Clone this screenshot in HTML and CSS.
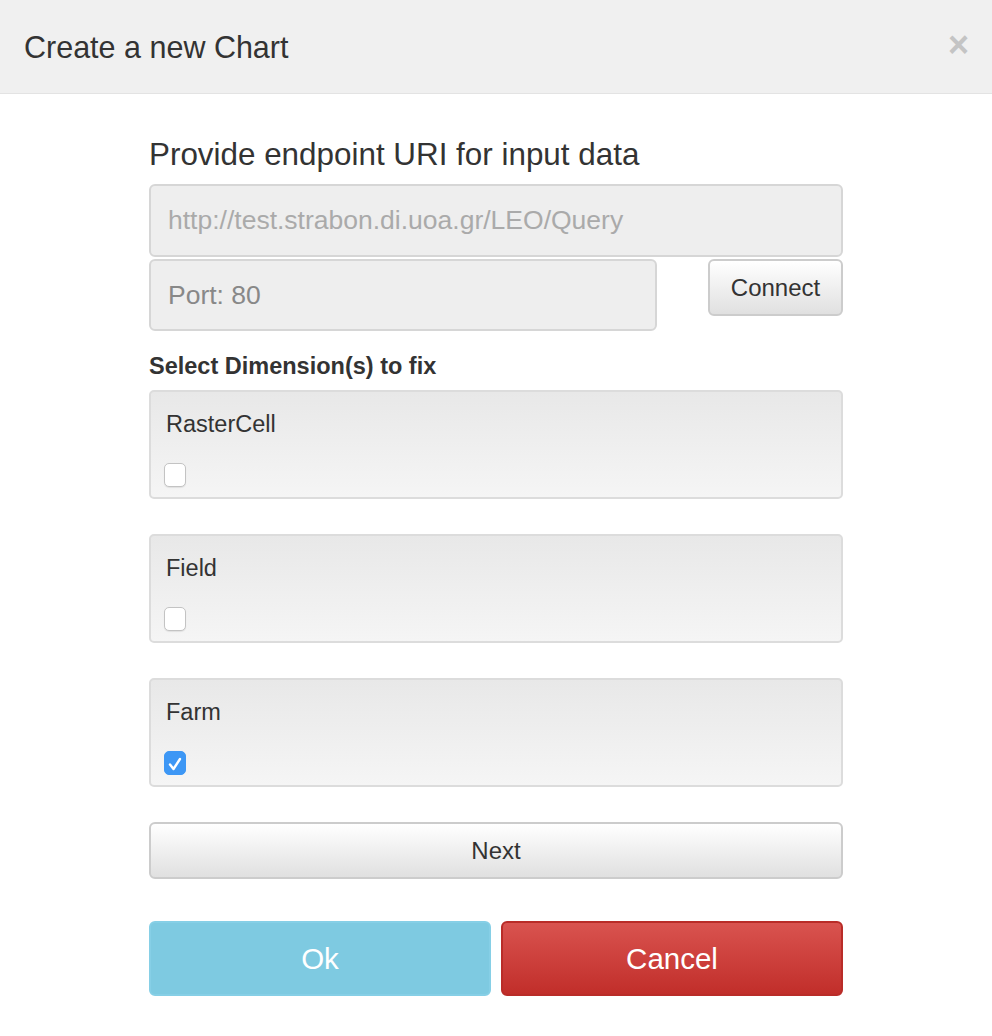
FILE: index.html
```html
<!DOCTYPE html>
<html>
<head>
<meta charset="utf-8">
<link rel="stylesheet" href="styles.css">
</head>
<body>
<div class="modal">
  <div class="modal-header">
    <h1 class="modal-title">Create a new Chart</h1>
    <span class="close">×</span>
  </div>
  <div class="modal-body">
    <div class="col">
      <h2 class="section-title">Provide endpoint URI for input data</h2>
      <div class="input url">http://test.strabon.di.uoa.gr/LEO/Query</div>
      <div class="port-row">
        <div class="input port">Port: 80</div>
        <button class="btn btn-default connect">Connect</button>
      </div>
      <div class="dims-label">Select Dimension(s) to fix</div>
      <div class="dims">
        <div class="panel">
          <div class="panel-label">RasterCell</div>
          <span class="checkbox"></span>
        </div>
        <div class="panel">
          <div class="panel-label">Field</div>
          <span class="checkbox"></span>
        </div>
        <div class="panel">
          <div class="panel-label">Farm</div>
          <span class="checkbox checked"><svg viewBox="0 0 22 22" width="22" height="22"><path d="M6 11.5 L9.5 16 L16 6" fill="none" stroke="#fff" stroke-width="2.4" stroke-linecap="round" stroke-linejoin="round"/></svg></span>
        </div>
      </div>
      <button class="btn btn-default next">Next</button>
      <div class="actions">
        <button class="btn btn-ok">Ok</button>
        <button class="btn btn-cancel">Cancel</button>
      </div>
    </div>
  </div>
</div>
</body>
</html>
```
FILE: styles.css
```css
* { box-sizing: border-box; }
html, body { margin: 0; padding: 0; background: #fff; }
body { font-family: "Liberation Sans", Arial, sans-serif; color: #333; }
.modal { width: 992px; height: 1036px; background: #fff; }
.modal-header {
  height: 94px;
  background: #f0f0f0;
  border-bottom: 1px solid #e3e3e3;
  display: flex;
  align-items: center;
  justify-content: space-between;
  padding: 0 24px 0 24px;
}
.modal-title { margin: 0; font-size: 30.5px; font-weight: normal; color: #333; line-height: 40px; }
.close { font-size: 36px; font-weight: bold; color: #c4c4c4; line-height: 1; margin-right: -1px; margin-top: -4px; }
.modal-body { display: flex; justify-content: center; padding-top: 41px; }
.col { width: 694px; display: flex; flex-direction: column; }
.section-title { margin: 0 0 9px; font-size: 31.4px; font-weight: normal; color: #333; line-height: 40px; }
.input {
  background: #eee;
  border: 2px solid #d6d6d6;
  border-radius: 6px;
  color: #999;
  font-size: 26.5px;
  display: flex;
  align-items: center;
  padding-left: 17px;
}
.url { height: 73px; color: #aaa; }
.port-row { display: flex; justify-content: space-between; align-items: flex-start; margin-top: 2px; }
.port { width: 508px; height: 72px; color: #888; }
.btn {
  font-family: "Liberation Sans", Arial, sans-serif;
  cursor: pointer;
  border-radius: 6px;
  padding: 0;
}
.btn-default {
  background: linear-gradient(#fff, #e0e0e0);
  border: 2px solid #ccc;
  color: #333;
  font-size: 24px;
}
.connect { width: 135px; height: 57px; }
.dims-label { font-weight: bold; font-size: 23.5px; color: #333; margin-top: 20px; line-height: 30px; }
.dims { display: flex; flex-direction: column; gap: 35px; margin-top: 9px; }
.panel {
  height: 109px;
  background: linear-gradient(#e8e8e8, #f5f5f5);
  border: 2px solid #dcdcdc;
  border-radius: 5px;
  padding: 17px 0 0 15px;
  display: flex;
  flex-direction: column;
  align-items: flex-start;
}
.panel-label { font-size: 23.5px; color: #333; line-height: 30px; }
.checkbox {
  margin-top: 24px;
  margin-left: -2px;
  width: 22px;
  height: 24px;
  background: #fff;
  border: 1px solid #c3c3c3;
  border-radius: 5px;
  box-shadow: 0 1px 1px rgba(0,0,0,0.08);
  display: block;
}
.checkbox.checked { background: #3d97f5; border-color: #3d97f5; box-shadow: none; }
.checkbox svg { display: block; margin-top: 1px; margin-left: -1px; }
.next { height: 57px; width: 100%; margin-top: 35px; }
.actions { display: flex; justify-content: space-between; margin-top: 42px; }
.actions .btn { width: 342px; height: 75px; font-size: 29.5px; color: #fff; }
.btn-ok { background: #7ecae1; border: 2px solid #86cfe6; }
.btn-cancel { background: linear-gradient(#d9534f, #c12e2a); border: 2px solid #b92c28; }
```
